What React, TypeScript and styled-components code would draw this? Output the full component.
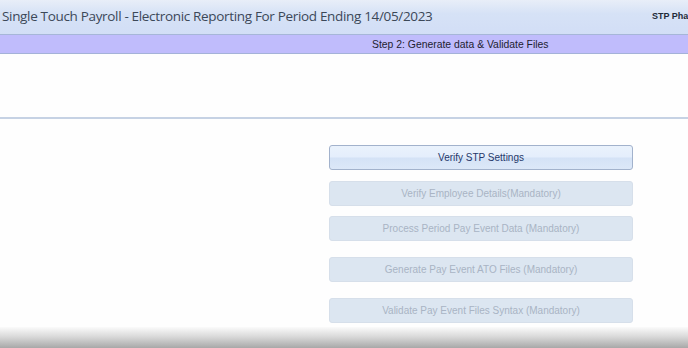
import React from "react";
import styled, { createGlobalStyle } from "styled-components";

const GlobalStyle = createGlobalStyle`
  html, body {
    margin: 0;
    padding: 0;
    background: #fefefe;
  }
  * {
    box-sizing: border-box;
  }
`;

const steps = [
  { label: "Verify STP Settings", enabled: true, gap: 26 },
  { label: "Verify Employee Details(Mandatory)", enabled: false, gap: 11 },
  { label: "Process Period Pay Event Data (Mandatory)", enabled: false, gap: 10 },
  { label: "Generate Pay Event ATO Files (Mandatory)", enabled: false, gap: 16 },
  { label: "Validate Pay Event Files Syntax (Mandatory)", enabled: false, gap: 16 },
];

const App = () => {
  return (
    <Page>
      <GlobalStyle />
      <TitleBar>
        <Title>Single Touch Payroll - Electronic Reporting For Period Ending 14/05/2023</Title>
        <Phase>STP Phase 2</Phase>
      </TitleBar>
      <StepBar>
        <StepText>Step 2: Generate data &amp; Validate Files</StepText>
      </StepBar>
      <InfoArea />
      <Content>
        <ButtonColumn>
          {steps.map((s) => (
            <StepButton key={s.label} $enabled={s.enabled} $gap={s.gap} disabled={!s.enabled}>
              {s.label}
            </StepButton>
          ))}
        </ButtonColumn>
      </Content>
      <Shade />
    </Page>
  );
};
export default App;

const Page = styled.div`
  width: 688px;
  height: 348px;
  display: flex;
  flex-direction: column;
  overflow: hidden;
  background: #fefefe;
`;

const TitleBar = styled.div`
  height: 35px;
  flex-shrink: 0;
  display: flex;
  align-items: center;
  justify-content: space-between;
  padding-left: 2px;
  background: linear-gradient(#e8eef8 0%, #d6e2f6 40%, #d2def6 100%);
  border-bottom: 1px solid #a6b6d8;
  white-space: nowrap;
  overflow: hidden;
`;

const Title = styled.div`
  font-family: "Open Sans", "Noto Sans", sans-serif;
  font-size: 13.5px;
  color: #3c4858;
  letter-spacing: -0.33px;
  padding-bottom: 3px;
`;

const Phase = styled.div`
  font-family: "Liberation Sans", Arial, sans-serif;
  font-size: 9px;
  font-weight: bold;
  color: #222a38;
  margin-left: auto;
  width: 36px;
  overflow: hidden;
  padding-bottom: 3px;
`;

const StepBar = styled.div`
  height: 19px;
  flex-shrink: 0;
  background: #c0bcfc;
  border-bottom: 1px solid #a4b2d8;
  display: flex;
  align-items: center;
  padding-left: 372px;
`;

const StepText = styled.div`
  font-family: "Liberation Sans", Arial, sans-serif;
  font-size: 10.4px;
  color: #1e2230;
`;

const InfoArea = styled.div`
  height: 65px;
  flex-shrink: 0;
  border-bottom: 2px solid #c6d2e4;
`;

const Content = styled.div`
  flex: 1;
  display: flex;
`;

const ButtonColumn = styled.div`
  margin-left: 329px;
  width: 304px;
  display: flex;
  flex-direction: column;
`;

const StepButton = styled.button<{ $enabled: boolean; $gap: number }>`
  margin: ${(p) => p.$gap}px 0 0 0;
  height: 25px;
  flex-shrink: 0;
  padding: 0;
  border-radius: 3px;
  font-family: "Liberation Sans", Arial, sans-serif;
  font-size: 10px;
  cursor: ${(p) => (p.$enabled ? "pointer" : "default")};
  color: ${(p) => (p.$enabled ? "#26386a" : "#a9b4c4")};
  border: 1px solid ${(p) => (p.$enabled ? "#a2b2cc" : "#d6dfea")};
  background: ${(p) =>
    p.$enabled
      ? "linear-gradient(#eaf2fc 0%, #e4eefc 48%, #d4e2f6 52%, #dce8f8 100%)"
      : "#dce6f1"};
`;

const Shade = styled.div`
  height: 21px;
  flex-shrink: 0;
  background: linear-gradient(#fbfbfb 0%, #dadada 45%, #a8a8a8 100%);
`;
